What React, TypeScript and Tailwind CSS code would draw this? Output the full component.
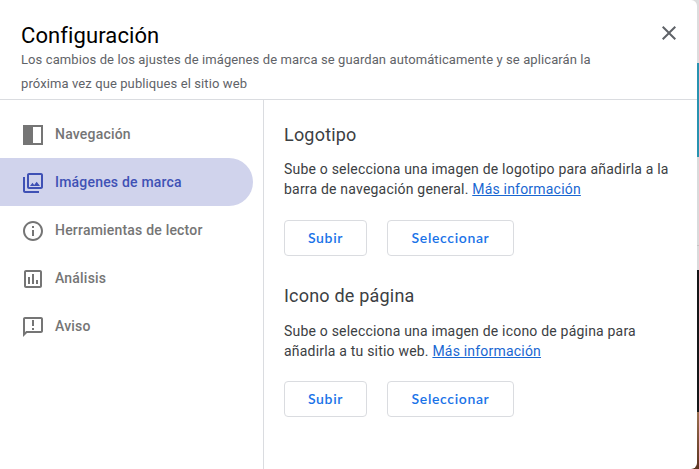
import type { ReactNode } from "react";

function Icon({ children }: { children: ReactNode }) {
  return (
    <svg viewBox="0 0 24 24" className="mt-0.5 size-6 shrink-0 fill-current" aria-hidden="true">
      {children}
    </svg>
  );
}

const items = [
  {
    label: "Navegación",
    icon: <path d="M2 2h20v20H2zM12 4v16h8V4z" fillRule="evenodd" />,
  },
  {
    label: "Imágenes de marca",
    active: true,
    icon: (
      <path d="M20 4v12H8V4h12m0-2H8c-1.1 0-2 .9-2 2v12c0 1.1.9 2 2 2h12c1.1 0 2-.9 2-2V4c0-1.1-.9-2-2-2zm-8.5 9.67l1.69 2.26 2.48-3.1L19 15H9zM2 6v14c0 1.1.9 2 2 2h14v-2H4V6H2z" />
    ),
  },
  {
    label: "Herramientas de lector",
    icon: (
      <path d="M11 7h2v2h-2zm0 4h2v6h-2zm1-9C6.48 2 2 6.48 2 12s4.48 10 10 10 10-4.48 10-10S17.52 2 12 2zm0 18c-4.41 0-8-3.59-8-8s3.59-8 8-8 8 3.59 8 8-3.59 8-8 8z" />
    ),
  },
  {
    label: "Análisis",
    icon: (
      <path d="M19 3H5c-1.1 0-2 .9-2 2v14c0 1.1.9 2 2 2h14c1.1 0 2-.9 2-2V5c0-1.1-.9-2-2-2zm0 16H5V5h14v14zM7 10h2v7H7zm4-3h2v10h-2zm4 6h2v4h-2z" />
    ),
  },
  {
    label: "Aviso",
    icon: (
      <path d="M20 2H4c-1.1 0-1.99.9-1.99 2L2 22l4-4h14c1.1 0 2-.9 2-2V4c0-1.1-.9-2-2-2zm0 14H5.17l-.59.59-.58.58V4h16v12zm-9-3h2v2h-2zm0-8h2v6h-2z" />
    ),
  },
];

function Section({ title, first, second }: { title: string; first: string; second: string }) {
  return (
    <section>
      <h2 className="text-[18px] leading-6 tracking-[0.2px] text-[#3c4043]">{title}</h2>
      <p className="mt-[12.3px] whitespace-nowrap text-sm leading-5 tracking-[0.2px] text-[#3c4043]">
        {first}
        <br />
        {second}{" "}
        <a href="#" className="text-[#1967d2] underline">
          Más información
        </a>
      </p>
      <div className="mt-[20.7px] flex gap-5 font-['Lato',sans-serif] text-sm font-semibold tracking-[0.65px] text-[#1a73e8]">
        <button className="h-9 w-[83px] rounded border border-[#dadce0]">Subir</button>
        <button className="h-9 w-[127px] rounded border border-[#dadce0]">Seleccionar</button>
      </div>
    </section>
  );
}

export default function App() {
  return (
    <div className="flex h-[469px] w-[699px] overflow-hidden bg-white font-['Roboto',sans-serif]">
      <main className="z-10 flex w-[697px] shrink-0 flex-col rounded-r-[6px] bg-white">
        <header className="flex h-[100px] shrink-0 justify-between border-b border-[#dadce0] pl-[21px]">
          <div className="pt-[22px]">
            <h1 className="pt-px text-[22px] leading-[25px] tracking-[0.1px] text-black">Configuración</h1>
            <p className="whitespace-nowrap text-[13px] leading-6 tracking-[0.1px] text-[#5f6368]">
              Los cambios de los ajustes de imágenes de marca se guardan automáticamente y se aplicarán la
              <br />
              próxima vez que publiques el sitio web
            </p>
          </div>
          <button aria-label="Cerrar" className="mt-[21px] mr-4 size-6 text-[#5f6368]">
            <svg viewBox="0 0 24 24" className="size-6 fill-current">
              <path d="M19 6.41L17.59 5 12 10.59 6.41 5 5 6.41 10.59 12 5 17.59 6.41 19 12 13.41 17.59 19 19 17.59 13.41 12z" />
            </svg>
          </button>
        </header>
        <div className="flex grow">
          <nav className="w-[264px] shrink-0 border-r border-[#dadce0] pt-[10px]">
            {items.map((item) => (
              <a
                key={item.label}
                href="#"
                className={
                  item.active
                    ? "flex h-12 w-[253px] items-center gap-[10px] rounded-r-full bg-[#d0d3ec] pl-[21px] text-[#3f51b5]"
                    : "flex h-12 w-[253px] items-center gap-[10px] pl-[21px] text-[#757575]"
                }
              >
                <Icon>{item.icon}</Icon>
                <span className="text-sm font-medium tracking-[0.2px]">{item.label}</span>
              </a>
            ))}
          </nav>
          <div className="flex flex-col gap-[28.3px] pt-[23px] pl-5">
            <Section
              title="Logotipo"
              first="Sube o selecciona una imagen de logotipo para añadirla a la"
              second="barra de navegación general."
            />
            <Section
              title="Icono de página"
              first="Sube o selecciona una imagen de icono de página para"
              second="añadirla a tu sitio web."
            />
          </div>
        </div>
      </main>
      <aside className="-ml-2 flex w-2.5 shrink-0 flex-col">
        <div className="h-[63px] bg-[#dcdcdd]" />
        <div className="h-[94px] bg-[#2893b0]" />
        <div className="h-[88px] bg-[#d9dadb]" />
        <div className="h-px bg-[#c4c4c4]" />
        <div className="h-6 bg-[#d9dadb]" />
        <div className="h-[142px] bg-[#161718]" />
        <div className="grow bg-linear-to-b from-[#9a7050] to-[#5c3320]" />
      </aside>
    </div>
  );
}
